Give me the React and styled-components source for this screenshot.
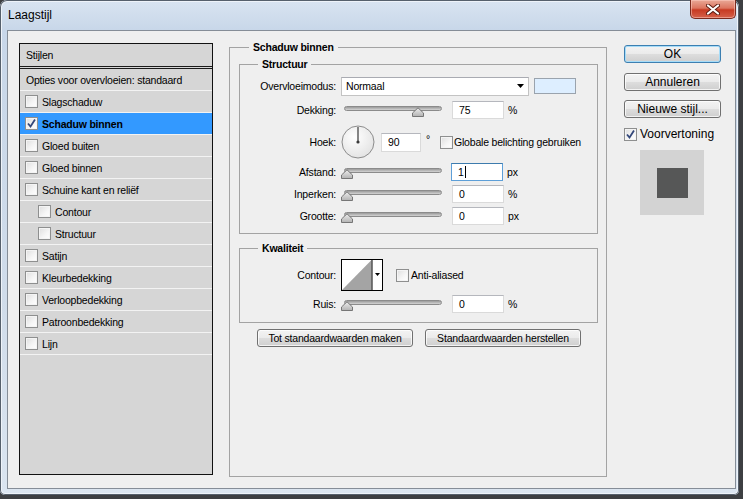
import React from "react";
import styled, { createGlobalStyle } from "styled-components";

const GlobalStyle = createGlobalStyle`
  html, body {
    margin: 0;
    padding: 0;
    background: #3d3f42;
  }
  body {
    width: 743px;
    height: 499px;
    overflow: hidden;
    font-family: "Liberation Sans", Arial, sans-serif;
    font-size: 10.5px;
    letter-spacing: -0.2px;
    color: #000;
  }
`;

const Window = styled.div`
  width: 739px;
  height: 495px;
  box-sizing: border-box;
  display: flex;
  flex-direction: column;
  padding: 0 3px 6px 7px;
  border-radius: 7px 7px 5px 5px;
  background: linear-gradient(to bottom, #d9e4f1 0px, #c8d7e9 30px, #d0dcea 60%, #dbe5f0 100%);
  box-shadow: inset 0 0 0 1px #56606c, inset 0 0 0 2px #eef3f9;
`;

const TitleBar = styled.div`
  height: 30px;
  flex: none;
  display: flex;
  justify-content: space-between;
  align-items: flex-start;
`;

const Title = styled.div`
  margin: 8px 0 0 1px;
  font-size: 12px;
  letter-spacing: 0;
  line-height: 14px;
  color: #000;
`;

const CloseButton = styled.div`
  width: 46px;
  height: 19px;
  box-sizing: border-box;
  border: 1px solid #7a2a1e;
  border-top: none;
  border-radius: 0 0 5px 5px;
  background: linear-gradient(to bottom, #e9a897 0%, #dc7560 45%, #c73a22 55%, #d5614a 100%);
  box-shadow: inset 0 0 0 1px rgba(255, 210, 200, 0.5);
  display: flex;
  align-items: center;
  justify-content: center;
`;

const Client = styled.div`
  flex: 1;
  box-sizing: border-box;
  border: 1px solid #858d97;
  background: #efefef;
  display: grid;
  grid-template-columns: 194px 378px 98px;
  column-gap: 16px;
  align-items: start;
  padding: 12px 0 0 11px;
`;

/* ---------- left list ---------- */

const StylesList = styled.div`
  height: 432px;
  box-sizing: border-box;
  border: 1px solid #121212;
  background: #d6d6d6;
  display: flex;
  flex-direction: column;
`;

const ListHeader = styled.div`
  height: 25px;
  flex: none;
  box-sizing: border-box;
  border-bottom: 3px double #1a1a1a;
  display: flex;
  align-items: center;
  padding-left: 6px;
`;

const ListItem = styled.div`
  height: 22px;
  flex: none;
  box-sizing: border-box;
  border-bottom: 1px solid #f3f3f3;
  display: flex;
  align-items: center;
  gap: 4px;
  padding-left: ${(p) => p.$indent}px;
  background: ${(p) => (p.$selected ? "#3399ff" : "transparent")};
  font-weight: ${(p) => (p.$selected ? "bold" : "normal")};
  white-space: nowrap;
`;

const Box = styled.span`
  width: 13px;
  height: 13px;
  flex: none;
  box-sizing: border-box;
  border: 1px solid #8e8f8f;
  background: linear-gradient(135deg, #dedede 0%, #f6f6f6 60%, #ffffff 100%);
  box-shadow: inset 0 0 0 1px #f4f4f4;
  display: inline-flex;
  align-items: center;
  justify-content: center;
`;

const Check = ({ checked }) => (
  <Box>
    {checked && (
      <svg width="11" height="11" viewBox="0 0 11 11">
        <path d="M2 5.5 L4.5 8.5 L9 1.5" fill="none" stroke="#33477a" strokeWidth="1.8" />
      </svg>
    )}
  </Box>
);

/* ---------- main groups ---------- */

const Group = styled.fieldset`
  margin: ${(p) => p.$mt || 0}px 0 0 0;
  padding: ${(p) => p.$pt || 0}px ${(p) => p.$pr || 0}px 0 ${(p) => p.$pl || 0}px;
  height: ${(p) => p.$h}px;
  box-sizing: border-box;
  min-width: 0;
  border: 1px solid #a3a3a3;
  display: flex;
  flex-direction: column;
`;

const Legend = styled.legend`
  margin-left: ${(p) => p.$ml}px;
  padding: 0 4px;
  font-weight: bold;
  font-size: 10.5px;
  line-height: 13px;
`;

const Row = styled.div`
  height: ${(p) => p.$h || 20}px;
  margin-top: ${(p) => p.$mt || 0}px;
  flex: none;
  display: flex;
  align-items: center;
  white-space: nowrap;
`;

const Label = styled.span`
  width: 96px;
  flex: none;
  text-align: right;
  margin-right: 5px;
`;

const Select = styled.div`
  width: 188px;
  height: 19px;
  box-sizing: border-box;
  border: 1px solid #c3c3c3;
  border-top-color: #a9abb2;
  background: #fff;
  display: flex;
  align-items: center;
  justify-content: space-between;
  padding: 0 4px 0 4px;
`;

const Swatch = styled.div`
  width: 42px;
  height: 16px;
  margin-left: 5px;
  box-sizing: border-box;
  border: 1px solid #9aa3ad;
  background: #ddeeff;
`;

const SliderWrap = styled.div`
  position: relative;
  width: 106px;
  height: 20px;
  flex: none;
`;

const Track = styled.div`
  margin: 6px 0 0 3px;
  width: 98px;
  height: 5px;
  box-sizing: border-box;
  border: 1px solid #8b8b8b;
  border-radius: 3px;
  background: linear-gradient(to bottom, #9a9a9a, #d4d4d4);
`;

const Thumb = styled.svg`
  position: absolute;
  top: 7px;
`;

const Slider = ({ value }) => (
  <SliderWrap>
    <Track />
    <Thumb width="12" height="10" viewBox="0 0 12 10" style={{ left: value * 0.94 }}>
      <defs>
        <linearGradient id={"tg" + value} x1="0" y1="0" x2="0" y2="1">
          <stop offset="0" stopColor="#eeeeee" />
          <stop offset="1" stopColor="#b2b2b2" />
        </linearGradient>
      </defs>
      <path d="M0.5 9.5 L0.5 6 L6 0.8 L11.5 6 L11.5 9.5 Z" fill={"url(#tg" + value + ")"} stroke="#767676" />
    </Thumb>
  </SliderWrap>
);

const Field = styled.div`
  width: ${(p) => p.$w || 52}px;
  height: ${(p) => p.$hh || 18}px;
  margin-left: ${(p) => p.$ml || 5}px;
  flex: none;
  box-sizing: border-box;
  border: 1px solid ${(p) => (p.$focus ? "#5d9fd8" : "#dadada")};
  border-top-color: ${(p) => (p.$focus ? "#3d7bad" : "#b5b7bd")};
  background: #fff;
  display: flex;
  align-items: center;
  padding-left: 6px;
`;

const Caret = styled.span`
  width: 1px;
  height: 12px;
  margin-left: 1px;
  background: #000;
`;

const Unit = styled.span`
  margin-left: 4px;
`;

const Degree = styled.span`
  margin: -6px 0 0 5px;
`;

const CheckLabel = styled.label`
  display: flex;
  align-items: center;
  gap: ${(p) => p.$gap || 1}px;
  margin-left: ${(p) => p.$ml || 0}px;
`;

const ButtonRow = styled.div`
  margin-top: 6px;
  display: flex;
  justify-content: center;
  gap: 12px;
  padding-left: 1px;
`;

const PushButton = styled.div`
  width: ${(p) => p.$w}px;
  height: 18px;
  flex: none;
  box-sizing: border-box;
  border: 1px solid ${(p) => (p.$default ? "#3c7fb1" : "#707070")};
  border-radius: 3px;
  background: linear-gradient(to bottom, #f3f3f3 0%, #ebebeb 48%, #dddddd 52%, #cfcfcf 100%);
  box-shadow: inset 0 0 0 1px ${(p) => (p.$default ? "#a6dcf8" : "rgba(255,255,255,0.75)")};
  font-size: ${(p) => (p.$big ? 12 : 10.5)}px;
  letter-spacing: ${(p) => (p.$big ? 0 : -0.2)}px;
  display: flex;
  align-items: center;
  justify-content: center;
  margin-top: ${(p) => p.$mt || 0}px;
`;

/* ---------- right column ---------- */

const Side = styled.div`
  display: flex;
  flex-direction: column;
  margin-left: 1px;
  padding-top: 2px;
`;

const PreviewLabel = styled(CheckLabel)`
  margin-top: 9px;
  font-size: 12px;
  letter-spacing: 0;
  gap: 3px;
`;

const Preview = styled.div`
  width: 64px;
  height: 65px;
  margin: 9px 0 0 16px;
  background: #d3d3d3;
  display: flex;
  align-items: center;
  justify-content: center;
`;

const PreviewSquare = styled.div`
  width: 31px;
  height: 30px;
  background: #565757;
`;

const Arrow = () => (
  <svg width="7" height="4" viewBox="0 0 7 4">
    <path d="M0 0 H7 L3.5 4 Z" fill="#000" />
  </svg>
);

const Dial = () => (
  <svg width="34" height="34" viewBox="0 0 34 34">
    <defs>
      <radialGradient id="dialg" cx="0.4" cy="0.35" r="0.7">
        <stop offset="0" stopColor="#ffffff" />
        <stop offset="1" stopColor="#e2e2e2" />
      </radialGradient>
    </defs>
    <circle cx="17" cy="17" r="16" fill="url(#dialg)" stroke="#8c8c8c" />
    <line x1="17" y1="17" x2="17" y2="2" stroke="#3a3a3a" strokeWidth="1.2" />
    <circle cx="17" cy="17" r="1.6" fill="#3a3a3a" />
  </svg>
);

const ContourPicker = () => (
  <svg width="42" height="32" viewBox="0 0 42 32">
    <rect x="0.5" y="0.5" width="41" height="31" fill="#fff" stroke="#000" />
    <path d="M1 31 L30.5 1 L30.5 31 Z" fill="#a4a4a4" />
    <line x1="31" y1="0" x2="31" y2="32" stroke="#000" />
    <path d="M34 14 H39 L36.5 17 Z" fill="#000" />
  </svg>
);

const CloseX = () => (
  <svg width="14" height="11" viewBox="0 0 14 11">
    <path d="M2 1.5 L12 9.5 M12 1.5 L2 9.5" stroke="#5a1a10" strokeWidth="4" strokeLinecap="round" />
    <path d="M2 1.5 L12 9.5 M12 1.5 L2 9.5" stroke="#ffffff" strokeWidth="2.2" strokeLinecap="round" />
  </svg>
);

const styles = [
  { name: "Slagschaduw", indent: 5 },
  { name: "Schaduw binnen", indent: 5, checked: true, selected: true },
  { name: "Gloed buiten", indent: 5 },
  { name: "Gloed binnen", indent: 5 },
  { name: "Schuine kant en reliëf", indent: 5 },
  { name: "Contour", indent: 18 },
  { name: "Structuur", indent: 18 },
  { name: "Satijn", indent: 5 },
  { name: "Kleurbedekking", indent: 5 },
  { name: "Verloopbedekking", indent: 5 },
  { name: "Patroonbedekking", indent: 5 },
  { name: "Lijn", indent: 5 },
];

export default function App() {
  return (
    <>
      <GlobalStyle />
      <Window>
        <TitleBar>
          <Title>Laagstijl</Title>
          <CloseButton>
            <CloseX />
          </CloseButton>
        </TitleBar>
        <Client>
          <StylesList>
            <ListHeader>Stijlen</ListHeader>
            <ListItem $indent={6}>Opties voor overvloeien: standaard</ListItem>
            {styles.map((s) => (
              <ListItem key={s.name} $indent={s.indent} $selected={s.selected}>
                <Check checked={s.checked} />
                {s.name}
              </ListItem>
            ))}
          </StylesList>

          <Group $mt={-2} $h={436} $pl={9} $pr={8}>
            <Legend $ml={10}>Schaduw binnen</Legend>
            <Group $mt={4} $h={176} $pt={5}>
              <Legend $ml={18}>Structuur</Legend>
              <Row>
                <Label>Overvloeimodus:</Label>
                <Select>
                  Normaal
                  <Arrow />
                </Select>
                <Swatch />
              </Row>
              <Row $mt={4}>
                <Label>Dekking:</Label>
                <Slider value={75} />
                <Field>75</Field>
                <Unit>%</Unit>
              </Row>
              <Row $mt={5} $h={34}>
                <Label>Hoek:</Label>
                <Dial />
                <Field $w={40} $hh={19} $ml={6}>90</Field>
                <Degree>°</Degree>
                <CheckLabel $ml={10}>
                  <Check />
                  Globale belichting gebruiken
                </CheckLabel>
              </Row>
              <Row $mt={3}>
                <Label>Afstand:</Label>
                <Slider value={0} />
                <Field $focus $ml={4}>
                  1<Caret />
                </Field>
                <Unit>px</Unit>
              </Row>
              <Row $mt={2}>
                <Label>Inperken:</Label>
                <Slider value={0} />
                <Field>0</Field>
                <Unit>%</Unit>
              </Row>
              <Row $mt={2}>
                <Label>Grootte:</Label>
                <Slider value={0} />
                <Field>0</Field>
                <Unit>px</Unit>
              </Row>
            </Group>

            <Group $mt={8} $h={81} $pt={4}>
              <Legend $ml={18}>Kwaliteit</Legend>
              <Row $h={32}>
                <Label>Contour:</Label>
                <ContourPicker />
                <CheckLabel $ml={13} $gap={2}>
                  <Check />
                  Anti-aliased
                </CheckLabel>
              </Row>
              <Row $mt={3}>
                <Label>Ruis:</Label>
                <Slider value={0} />
                <Field>0</Field>
                <Unit>%</Unit>
              </Row>
            </Group>

            <ButtonRow>
              <PushButton $w={156}>Tot standaardwaarden maken</PushButton>
              <PushButton $w={156}>Standaardwaarden herstellen</PushButton>
            </ButtonRow>
          </Group>

          <Side>
            <PushButton $w={97} $big $default>OK</PushButton>
            <PushButton $w={97} $big $mt={10}>Annuleren</PushButton>
            <PushButton $w={97} $big $mt={9}>Nieuwe stijl...</PushButton>
            <PreviewLabel>
              <Check checked />
              Voorvertoning
            </PreviewLabel>
            <Preview>
              <PreviewSquare />
            </Preview>
          </Side>
        </Client>
      </Window>
    </>
  );
}
